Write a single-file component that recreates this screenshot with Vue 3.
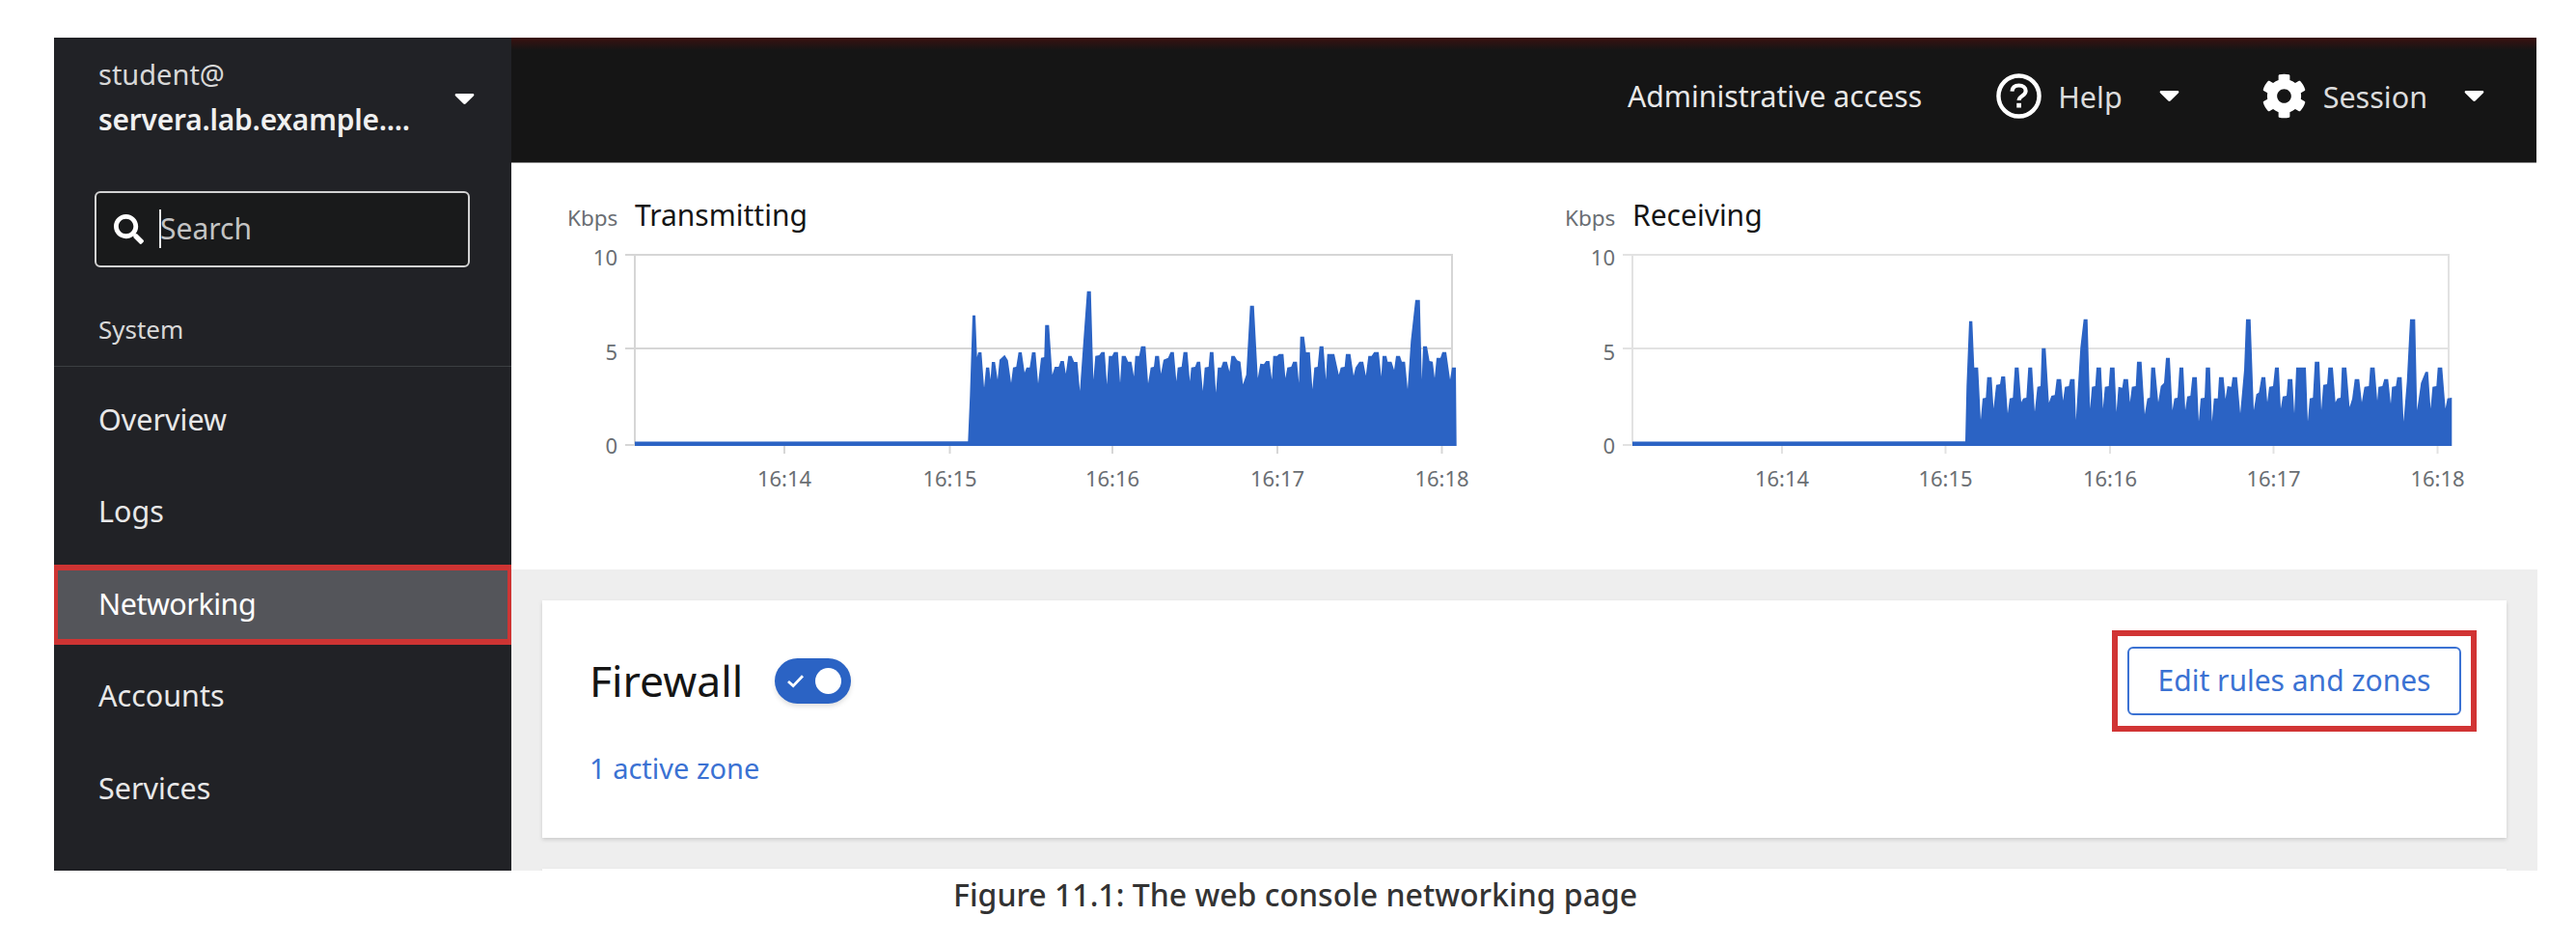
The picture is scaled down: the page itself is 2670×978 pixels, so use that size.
<template>
  <div class="page">
    <div class="console">
      <aside class="sidebar">
        <div class="host">
          <div class="host-text">
            <div class="host-user">student@</div>
            <div class="host-name">servera.lab.example....</div>
          </div>
          <svg class="caret host-caret" viewBox="0 0 20 11"><path d="M1.500 0h17c1.200 0 1.800 1.400 1 2.300l-8.400 8.200c-.6.600-1.600.600-2.200 0L.5 2.300C-.3 1.400.3 0 1.500 0z" /></svg>
        </div>
        <div class="search">
          <svg class="search-icon" viewBox="0 0 512 512"><path d="M505 442.700L405.300 343c-4.500-4.500-10.600-7-17-7H372c27.600-35.300 44-79.700 44-128C416 93.100 322.900 0 208 0S0 93.100 0 208s93.100 208 208 208c48.300 0 92.700-16.400 128-44v16.300c0 6.400 2.500 12.500 7 17l99.700 99.700c9.400 9.400 24.600 9.400 33.900 0l28.300-28.300c9.400-9.400 9.400-24.600.1-34zM208 336c-70.700 0-128-57.200-128-128 0-70.700 57.200-128 128-128 70.700 0 128 57.200 128 128 0 70.700-57.200 128-128 128z" /></svg>
          <span class="search-text"><i class="cursor"></i>Search</span>
        </div>
        <div class="nav-section">System</div>
        <nav class="nav">
          <a v-for="item in navItems" :key="item" class="nav-item" :class="{ active: item === 'Networking' }">{{ item }}</a>
        </nav>
      </aside>

      <div class="content">
        <header class="topbar">
          <span class="admin">Administrative access</span>
          <div class="menu help">
            <svg class="menu-icon" viewBox="0 0 48 48">
              <circle cx="24" cy="24" r="21.500" fill="none" stroke="#fff" stroke-width="4.500" />
              <path d="M16.800 19c.4-4 3.300-6.200 7.300-6.200 4.200 0 7.200 2.400 7.200 5.800 0 5.300-7.200 5.200-7.200 10" fill="none" stroke="#fff" stroke-width="4.200" />
              <rect x="21.700" y="31.500" width="4.800" height="4.800" fill="#fff" />
            </svg>
            <span class="menu-label">Help</span>
            <svg class="caret" viewBox="0 0 20 11"><path d="M1.500 0h17c1.200 0 1.800 1.400 1 2.300l-8.400 8.200c-.6.600-1.600.600-2.200 0L.5 2.300C-.3 1.400.3 0 1.500 0z" /></svg>
          </div>
          <div class="menu session">
            <svg class="menu-icon" viewBox="0 0 512 512"><path fill="#fff" d="M487.400 315.700l-42.600-24.600c4.300-23.200 4.300-47 0-70.200l42.600-24.600c4.900-2.800 7.100-8.600 5.500-14-11.100-35.600-30-67.800-54.700-94.600-3.800-4.100-10-5.100-14.800-2.300L380.800 110c-17.900-15.400-38.500-27.300-60.800-35.100V25.800c0-5.600-3.900-10.500-9.400-11.700-36.700-8.200-74.300-7.800-109.200 0-5.500 1.200-9.400 6.100-9.400 11.700V75c-22.200 7.900-42.800 19.800-60.800 35.100L88.700 85.500c-4.900-2.800-11-1.900-14.800 2.300-24.700 26.700-43.600 58.900-54.700 94.600-1.700 5.400.6 11.200 5.500 14L67.300 221c-4.300 23.200-4.300 47 0 70.200l-42.600 24.600c-4.900 2.800-7.100 8.600-5.500 14 11.100 35.600 30 67.800 54.700 94.600 3.800 4.100 10 5.100 14.800 2.300l42.600-24.600c17.900 15.400 38.500 27.300 60.800 35.100v49.200c0 5.600 3.900 10.500 9.400 11.700 36.700 8.200 74.300 7.800 109.200 0 5.500-1.200 9.400-6.100 9.400-11.700v-49.200c22.200-7.900 42.800-19.800 60.800-35.100l42.600 24.600c4.900 2.800 11 1.900 14.800-2.300 24.700-26.700 43.600-58.900 54.700-94.600 1.500-5.500-.7-11.300-5.600-14.100zM256 336c-44.100 0-80-35.900-80-80s35.900-80 80-80 80 35.900 80 80-35.900 80-80 80z" /></svg>
            <span class="menu-label">Session</span>
            <svg class="caret" viewBox="0 0 20 11"><path d="M1.500 0h17c1.200 0 1.800 1.400 1 2.300l-8.400 8.200c-.6.600-1.600.600-2.200 0L.5 2.300C-.3 1.400.3 0 1.500 0z" /></svg>
          </div>
        </header>

        <section class="charts">
          <div v-for="chart in charts" :key="chart.title" class="chart">
            <div class="chart-head">
              <span class="chart-unit">Kbps</span>
              <span class="chart-title">{{ chart.title }}</span>
            </div>
            <svg class="plot" :viewBox="`${chart.left - 69} 250 960 270`" width="960" height="270">
              <line v-for="y in [264, 361, 461]" :key="y" :x1="chart.left - 10" :x2="chart.right" :y1="y" :y2="y" :stroke="chart.grid" stroke-width="2" />
              <line :x1="chart.left" :x2="chart.left" y1="263" y2="462" :stroke="chart.grid" stroke-width="2" />
              <line :x1="chart.right" :x2="chart.right" y1="263" y2="462" :stroke="chart.grid" stroke-width="2" />
              <line v-for="t in chart.ticks" :key="t.label" :x1="t.x" :x2="t.x" y1="461" y2="470" :stroke="chart.grid" stroke-width="2" />
              <path :d="chart.path" fill="#2b63c4" />
              <text v-for="l in yLabels" :key="l.text" :x="chart.left - 18" :y="l.y" text-anchor="end" class="axis">{{ l.text }}</text>
              <text v-for="t in chart.ticks" :key="t.label" :x="t.x" y="504" text-anchor="middle" class="axis">{{ t.label }}</text>
            </svg>
          </div>
        </section>

        <section class="cards">
          <div class="card">
            <div class="card-row">
              <div class="card-title">
                <h2>Firewall</h2>
                <span class="toggle">
                  <svg class="toggle-check" viewBox="0 0 20 16"><path d="M2 8.500l5.500 5L18 2.500" fill="none" stroke="#fff" stroke-width="3" /></svg>
                  <span class="knob"></span>
                </span>
              </div>
              <div class="callout">
                <button class="edit-btn">Edit rules and zones</button>
              </div>
            </div>
            <a class="zone-link">1 active zone</a>
          </div>
          <div class="card"></div>
        </section>
      </div>
    </div>
    <p class="caption">Figure 11.1: The web console networking page</p>
  </div>
</template>

<script setup>
const navItems = ['Overview', 'Logs', 'Networking', 'Accounts', 'Services']

const yLabels = [
  { text: '10', y: 275 },
  { text: '5', y: 373 },
  { text: '0', y: 470 },
]

// outline points read off the graph, [x, y] pairs at 3x from the crop origin
const txA = [0,472,10,472,16,330,24,80,33,80,38,210,42,195,52,195,60,305,66,242,76,242,80,280,84,225,94,225,102,280,108,218,124,203,134,220,144,290,150,242,160,240,167,195,177,195,186,258,192,242,202,242,209,195,220,195,228,292,237,212,247,210,250,110,262,110,272,265,280,240,292,240,298,222,308,222,314,262,322,206,332,206,340,225,350,225,358,315,368,170,380,5,392,5,400,280,406,206,418,204,425,194,435,194,442,295,448,206,458,206,464,194,476,194,483,290,488,206,500,206,508,224,518,224,526,270,530,206,542,206,548,176,562,176,570,292,578,242,588,240,592,206,604,206,610,262,618,218,632,212,640,194,650,194,658,285,662,242,674,240,680,194,692,194,700,285,704,242,716,240,722,224,732,224,740,315,746,242,758,240,762,194]
const txB = [0,194,8,194,16,320,22,242,32,242,38,224,50,224,58,255,64,206,74,206,82,220,92,224,100,295,110,265,122,50,134,50,146,275,154,230,165,232,172,222,182,222,190,280,194,206,206,206,212,200,226,200,232,275,238,242,250,240,256,224,268,224,274,290,278,146,290,146,296,195,308,195,316,310,322,242,332,240,338,176,350,176,358,280,362,200,384,200,398,265,404,242,416,240,420,200,434,200,444,268,450,242,462,224,474,224,482,268,490,206,500,206,508,194,522,194,530,270,534,206,546,206,550,224,562,224,570,250,576,206,588,206,594,224,604,224,612,310,622,160,636,32,650,32,656,280,660,176,672,176,680,222,690,224,696,275,702,212,714,212,720,194,732,194,744,280,750,242,762,242,764,486]
const rxA = [0,472,24,472,28,300,36,98,46,98,52,242,64,242,72,405,78,338,88,336,92,272,106,272,112,370,120,296,132,294,136,270,148,270,156,385,162,338,172,336,178,242,190,242,198,350,204,338,214,336,220,242,232,242,240,380,248,302,258,300,262,182,274,182,284,352,292,330,302,328,308,278,322,278,328,345,334,302,346,300,350,278,364,278,368,405,382,180,392,92,404,92,412,370,418,302,428,300,432,242,446,242,452,370,458,302,470,300,474,242,488,242,494,380,500,302,512,305,516,278,530,278,536,350,542,302,554,300,558,224,572,224,582,388,590,338,598,336,602,242,614,242,624,350,632,300,642,290,648,212,660,212,668,375,674,338,684,336,690,242,702,242,708,375,714,332,724,330,730,272,744,272,750,410,756,338,768,336,772,242]
const rxB = [20,242,26,410,32,338,44,338,48,272,62,272,68,340,74,300,86,302,90,272,104,272,114,385,126,250,132,92,146,92,156,375,164,325,172,320,180,272,192,272,198,350,204,302,216,300,222,242,234,242,240,370,246,332,258,330,262,278,276,278,282,385,288,242,318,242,324,410,330,338,340,336,346,224,360,224,366,375,372,296,384,294,388,242,402,242,410,350,416,338,426,336,430,242,444,242,454,365,462,340,470,278,484,278,492,350,500,302,514,300,518,242,532,242,540,345,544,302,556,300,562,278,574,278,582,355,586,302,598,300,602,272,616,272,622,410,632,285,642,92,658,92,664,375,676,290,690,256,698,256,706,370,712,302,724,300,728,242,742,242,752,370,758,338,772,336,772,486]

function areaPath(left, segments) {
  const pts = [[left, 462], [left, 457.5]]
  for (const [originX, values] of segments) {
    for (let i = 0; i < values.length; i += 2) {
      pts.push([originX + values[i] / 3, 300 + values[i + 1] / 3])
    }
  }
  return 'M' + pts.map(p => p[0].toFixed(1) + ' ' + p[1].toFixed(1)).join('L') + 'Z'
}

const charts = [
  {
    title: 'Transmitting',
    left: 658,
    right: 1505,
    grid: '#d6d6d6',
    path: areaPath(658, [[1000, txA], [1255, txB]]),
    ticks: [
      { label: '16:14', x: 813 },
      { label: '16:15', x: 984.5 },
      { label: '16:16', x: 1153 },
      { label: '16:17', x: 1324 },
      { label: '16:18', x: 1494.5 },
    ],
  },
  {
    title: 'Receiving',
    left: 1693,
    right: 2539,
    grid: '#e2e2e2',
    path: areaPath(1693, [[2030, rxA], [2285, rxB]]),
    ticks: [
      { label: '16:14', x: 1848 },
      { label: '16:15', x: 2017.5 },
      { label: '16:16', x: 2188 },
      { label: '16:17', x: 2357.5 },
      { label: '16:18', x: 2527.5 },
    ],
  },
]
</script>

<style scoped>
.page {
  padding: 39px 0 0 56px;
  font-family: "Noto Sans", sans-serif;
  color: #151515;
}
.console {
  display: flex;
  width: 2574px;
  height: 863px;
  overflow: hidden;
}
.sidebar {
  flex: 0 0 474px;
  background: #212226;
  color: #f0f0f0;
}
.host {
  display: flex;
  padding: 14px 38px 0 46px;
  justify-content: space-between;
}
.host-text {
  line-height: 47px;
  font-size: 29px;
}
.host-user {
  color: #d8d8d8;
}
.host-name {
  font-weight: 600;
  font-size: 29.900px;
  letter-spacing: -0.2px;
  white-space: nowrap;
}
.host-caret {
  margin-top: 44px;
}
.caret {
  flex: none;
  width: 21px;
  height: 11px;
  fill: #fff;
}
.search {
  display: flex;
  align-items: center;
  box-sizing: border-box;
  width: 389px;
  height: 79px;
  margin: 51px 0 0 42px;
  padding-left: 18px;
  background: #191a1b;
  border: 2px solid #d2d2d2;
  border-radius: 6px;
}
.search-icon {
  width: 31px;
  height: 31px;
  fill: #fff;
}
.search-text {
  position: relative;
  margin: -2px 0 0 17px;
  font-size: 30px;
  color: #c4c4c4;
}
.cursor {
  position: absolute;
  left: -1px;
  top: 1px;
  height: 40px;
  width: 1.500px;
  background: #e8e8e8;
}
.nav-section {
  margin-top: 48px;
  padding: 0 0 22px 46px;
  font-size: 26px;
  line-height: 32px;
  color: #d8d8d8;
  border-bottom: 1px solid #3c3f42;
}
.nav {
  display: flex;
  flex-direction: column;
  gap: 12.500px;
  padding-top: 14px;
}
.nav-item {
  display: flex;
  align-items: center;
  box-sizing: border-box;
  height: 83px;
  padding: 0 0 4px 46px;
  font-size: 30.500px;
  color: #e8e8e8;
}
.nav-item.active {
  padding: 0 0 4px 42px;
  background: #54555a;
  color: #fff;
  letter-spacing: -0.5px;
  border-style: solid;
  border-color: #ce3433;
  border-width: 6px 4px;
}
.content {
  flex: 1;
  display: flex;
  flex-direction: column;
  min-width: 0;
}
.topbar {
  flex: 0 0 130px;
  box-sizing: border-box;
  display: flex;
  align-items: center;
  justify-content: flex-end;
  margin-right: 1px;
  padding: 0 54px 8px 0;
  background: linear-gradient(#3a1110, #151515 13px);
  border-bottom: 1px solid #8a8a8a;
  color: #e8e8e8;
  font-size: 30.500px;
}
.admin {
  font-size: 30.200px;
}
.menu {
  display: flex;
  align-items: center;
}
.help {
  margin-left: 77px;
}
.session {
  margin-left: 85px;
}
.menu-icon {
  width: 47px;
  height: 47px;
  margin-right: 17px;
}
.menu-label {
  margin-right: 38px;
  color: #dcdcdc;
}
.charts {
  flex: 0 0 421px;
  display: grid;
  grid-template-columns: 1034px 1fr;
  padding: 34px 0 0 58px;
  box-sizing: border-box;
  background: #fff;
}
.chart {
  min-width: 0;
}
.chart-head {
  display: flex;
  align-items: baseline;
  height: 40px;
  margin-bottom: 7px;
  line-height: 40px;
}
.chart-unit {
  width: 70px;
  font-size: 22.500px;
  color: #6a6e73;
}
.chart-title {
  font-size: 30px;
}
.plot {
  display: block;
  margin-left: 1px;
}
.axis {
  font-size: 22px;
  fill: #6a6e73;
}
.cards {
  flex: 1;
  display: flex;
  flex-direction: column;
  gap: 32px;
  padding: 32px 32px 0;
  background: #eeeeee;
}
.card {
  flex: none;
  height: 246px;
  background: #fff;
  box-shadow: 0 2px 4px rgba(3, 3, 3, 0.14);
}
.card-row {
  display: flex;
  align-items: center;
  justify-content: space-between;
  padding: 31px 31px 0 49px;
}
.card-title {
  display: flex;
  align-items: center;
  gap: 33px;
}
.card-title h2 {
  margin: 0 0 2px;
  font-size: 44.500px;
  font-weight: 400;
}
.toggle {
  display: flex;
  align-items: center;
  justify-content: space-between;
  box-sizing: border-box;
  width: 79px;
  height: 47px;
  padding: 0 10px 0 12px;
  background: #2b63c4;
  border-radius: 24px;
  box-shadow: 0 3px 5px rgba(3, 3, 3, 0.12);
}
.toggle-check {
  width: 19px;
  height: 15px;
}
.knob {
  width: 27px;
  height: 27px;
  background: #fff;
  border-radius: 50%;
}
.callout {
  padding: 11px 10px;
  border: 6px solid #d13434;
}
.edit-btn {
  display: block;
  box-sizing: border-box;
  width: 346px;
  height: 71px;
  padding: 0 0 3px;
  background: #fff;
  border: 2px solid #3b72d3;
  border-radius: 6px;
  color: #3b72d3;
  font-family: inherit;
  font-size: 30px;
}
.zone-link {
  display: block;
  margin: 18px 0 0 49px;
  line-height: 40px;
  font-size: 29px;
  color: #3b72d3;
}
.caption {
  margin: 0;
  padding-left: 932px;
  line-height: 50px;
  font-size: 32px;
  font-weight: 500;
  color: #333;
  white-space: nowrap;
}
</style>

<style>
html, body {
  background: #fff;
  overflow: hidden;
}
</style>
